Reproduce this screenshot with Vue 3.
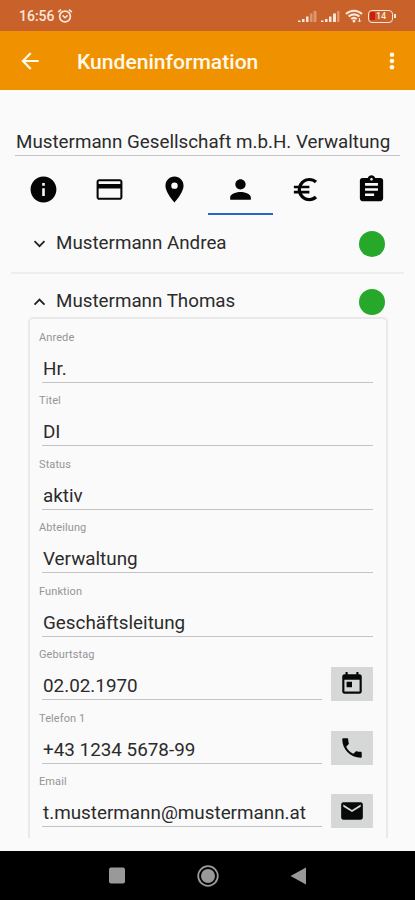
<script setup>
const tabs = [
  { name: 'info', d: 'M12 2C6.48 2 2 6.48 2 12s4.48 10 10 10 10-4.48 10-10S17.52 2 12 2zm1 15h-2v-6h2v6zm0-8h-2V7h2v2z' },
  { name: 'card', d: 'M20 4H4c-1.11 0-2 .89-2 2v12c0 1.11.89 2 2 2h16c1.11 0 2-.89 2-2V6c0-1.11-.89-2-2-2zm.4 14.400H3.600v-7.200h16.800v7.200zm0-10.700H3.600V5.600h16.800v2.100z' },
  { name: 'place', d: 'M12 2C8.13 2 5 5.13 5 9c0 5.25 7 13 7 13s7-7.75 7-13c0-3.87-3.13-7-7-7zm0 9.5a2.5 2.5 0 1 1 0-5 2.5 2.5 0 0 1 0 5z' },
  { name: 'person', active: true, d: 'M12 12c2.21 0 4-1.79 4-4s-1.79-4-4-4-4 1.79-4 4 1.79 4 4 4zm0 2c-2.67 0-8 1.34-8 4v2h16v-2c0-2.66-5.33-4-8-4z' },
  { name: 'euro', d: 'M15 18.5c-2.51 0-4.68-1.42-5.76-3.5H15v-2H8.58c-.05-.33-.08-.66-.08-1s.03-.67.08-1H15V9H9.24C10.32 6.92 12.5 5.5 15 5.5c1.61 0 3.09.59 4.23 1.57L21 5.3C19.41 3.87 17.3 3 15 3c-3.92 0-7.24 2.51-8.48 6H3v2h3.06c-.04.33-.06.66-.06 1s.02.67.06 1H3v2h3.52c1.24 3.49 4.56 6 8.48 6 2.31 0 4.41-.87 6-2.3l-1.78-1.77c-1.13.98-2.6 1.57-4.22 1.57z' },
  { name: 'clipboard', d: 'M19 3h-4.18C14.4 1.84 13.3 1 12 1s-2.4.84-2.82 2H5c-1.1 0-2 .9-2 2v14c0 1.1.9 2 2 2h14c1.1 0 2-.9 2-2V5c0-1.1-.9-2-2-2zm-7 0c.55 0 1 .45 1 1s-.45 1-1 1-1-.45-1-1 .45-1 1-1zm2 14H7v-2h7v2zm3-4H7v-2h10v2zm0-4H7V7h10v2z' },
]
const calendar = 'M19 3h-1V1h-2v2H8V1H6v2H5c-1.11 0-1.99.9-1.99 2L3 19c0 1.1.89 2 2 2h14c1.1 0 2-.9 2-2V5c0-1.1-.9-2-2-2zm0 16H5V8h14v11zM7 10h5v5H7z'
const phone = 'M6.62 10.79c1.44 2.83 3.76 5.14 6.59 6.59l2.2-2.2c.27-.27.67-.36 1.02-.24 1.12.37 2.33.57 3.57.57.55 0 1 .45 1 1V20c0 .55-.45 1-1 1-9.39 0-17-7.61-17-17 0-.55.45-1 1-1h3.5c.55 0 1 .45 1 1 0 1.25.2 2.45.57 3.57.11.35.03.74-.25 1.02l-2.2 2.2z'
const mail = 'M20 4H4c-1.1 0-1.99.9-1.99 2L2 18c0 1.1.9 2 2 2h16c1.1 0 2-.9 2-2V6c0-1.1-.9-2-2-2zm0 4l-8 5-8-5V6l8 5 8-5v2z'
const fields = [
  { label: 'Anrede', value: 'Hr.' },
  { label: 'Titel', value: 'DI' },
  { label: 'Status', value: 'aktiv' },
  { label: 'Abteilung', value: 'Verwaltung' },
  { label: 'Funktion', value: 'Geschäftsleitung' },
  { label: 'Geburtstag', value: '02.02.1970', icon: calendar },
  { label: 'Telefon 1', value: '+43 1234 5678-99', icon: phone },
  { label: 'Email', value: 't.mustermann@mustermann.at', icon: mail },
]
</script>

<template>
  <div class="screen">
    <div class="status">
      <span class="time">16:56</span>
      <svg class="alarm" viewBox="0 0 16 16" fill="none" stroke="currentColor">
        <circle cx="8" cy="8.5" r="5.4" stroke-width="1.7" />
        <path d="M1.2 4.2 4 1.7M14.8 4.2 12 1.7" stroke-width="1.8" />
        <path d="M5.6 7.4 8 9.7l2.6-2.3" stroke-width="1.5" />
      </svg>
      <span class="spacer"></span>
      <svg class="signal" viewBox="0 0 19 13" fill="currentColor">
        <path d="M0 10.500h2.500V12H0zM4 9h2.500v3H4zM8 6.500h2.500V12H8z" />
        <path d="M12 3.500h2.500V12H12zM15.500 1h3v11h-3z" opacity=".4" />
      </svg>
      <svg class="signal second" viewBox="0 0 19 13" fill="currentColor">
        <path d="M0 10.500h2.500V12H0zM4 9h2.500v3H4zM8 6.500h2.500V12H8zM12 3.500h3V12h-3z" />
        <path d="M16 1h2.500v11H16z" opacity=".4" />
      </svg>
      <svg class="wifi" viewBox="0 0 18 14" fill="none" stroke="currentColor">
        <path d="M1 5C5.500.7 12.500.7 17 5M3.600 7.600c3-3 7.800-3 10.800 0M6.200 10.100c1.600-1.500 4-1.500 5.600 0" stroke-width="2.1" />
        <circle cx="9" cy="12" r="1.500" fill="currentColor" stroke="none" />
        <path d="M14.500 9v4M13 11.500l1.500 1.500L16 11.500" stroke-width="1" />
      </svg>
      <span class="battery"><i class="charge"></i><b>14</b></span>
    </div>

    <header class="appbar">
      <svg class="back" viewBox="0 0 24 24" fill="currentColor">
        <path d="M20 11H7.830l5.590-5.590L12 4l-8 8 8 8 1.410-1.410L7.830 13H20v-2z" />
      </svg>
      <h1>Kundeninformation</h1>
      <svg class="more" viewBox="0 0 6 20" fill="currentColor">
        <circle cx="3" cy="3.800" r="2.300" /><circle cx="3" cy="10" r="2.300" /><circle cx="3" cy="16.200" r="2.300" />
      </svg>
    </header>

    <main>
      <div class="company"><span>Mustermann Gesellschaft m.b.H. Verwaltung</span></div>
      <nav class="tabs">
        <div v-for="t in tabs" :key="t.name" class="tab" :class="{ active: t.active }">
          <svg viewBox="0 0 24 24"><path :d="t.d" /></svg>
        </div>
      </nav>

      <div class="person">
        <svg class="chevron" viewBox="0 0 13 8"><path d="M1.500 1.200 6.500 6.200 11.500 1.200" /></svg>
        <span>Mustermann Andrea</span>
        <i class="dot"></i>
      </div>
      <div class="person open">
        <svg class="chevron" viewBox="0 0 13 8"><path d="M1.500 6.600 6.500 1.600 11.500 6.600" /></svg>
        <span>Mustermann Thomas</span>
        <i class="dot"></i>
      </div>

      <section class="panel">
        <div v-for="f in fields" :key="f.label" class="field">
          <label>{{ f.label }}</label>
          <div class="line">
            <div class="value">{{ f.value }}</div>
            <div v-if="f.icon" class="action">
              <svg viewBox="0 0 24 24"><path :d="f.icon" /></svg>
            </div>
          </div>
        </div>
      </section>
    </main>

    <footer class="sysnav">
      <svg viewBox="0 0 24 24"><rect x="4" y="3.500" width="16" height="16" rx="2" fill="#999" /></svg>
      <svg viewBox="0 0 24 24"><circle cx="12" cy="12" r="9.800" fill="none" stroke="#999" stroke-width="1.800" /><circle cx="12" cy="12" r="7" fill="#999" /></svg>
      <svg viewBox="0 0 24 24"><path d="M3.500 12 19 3.500v17z" fill="#999" /></svg>
    </footer>
  </div>
</template>

<style>
body {
  margin: 0;
  background: #fafafa;
}
</style>

<style scoped>
.screen {
  width: 415px;
  height: 900px;
  display: flex;
  flex-direction: column;
  overflow: hidden;
  background: #fafafa;
  color: #2b2b2b;
  font-family: Roboto, "Liberation Sans", sans-serif;
}
svg {
  display: block;
  flex: none;
}
.status {
  box-sizing: border-box;
  height: 31px;
  flex: none;
  display: flex;
  align-items: center;
  padding: 1px 20px 0 19px;
  background: #c8622a;
  color: #fbe6da;
}
.time {
  width: 36px;
  font-size: 14px;
  font-weight: 500;
}
.alarm {
  width: 16px;
  height: 16px;
  margin-left: 2px;
}
.spacer {
  flex: 1;
}
.signal {
  width: 19px;
  height: 13px;
  margin-right: 4px;
}
.signal.second {
  margin-right: 5px;
}
.wifi {
  width: 18px;
  height: 14px;
  margin-right: 5px;
}
.battery {
  position: relative;
  box-sizing: border-box;
  width: 25px;
  height: 13px;
  margin-right: 2px;
  border: 1.5px solid #fbe6da;
  border-radius: 4px;
  display: flex;
  align-items: center;
}
.battery::after {
  content: "";
  position: absolute;
  right: -4px;
  top: 3px;
  width: 2px;
  height: 4px;
  background: #fbe6da;
}
.charge {
  width: 5px;
  height: 8px;
  margin-left: 1px;
  background: #d01c0c;
}
.battery b {
  font-size: 9px;
  font-weight: 500;
  line-height: 10px;
  margin-left: 1px;
}
.appbar {
  height: 59px;
  flex: none;
  display: flex;
  align-items: center;
  background: #f09200;
  color: #fff8ec;
}
.back {
  width: 26px;
  height: 26px;
  margin-left: 17px;
}
h1 {
  flex: 1;
  margin: 2px 0 0 34px;
  font-size: 21.1px;
  font-weight: 500;
}
.more {
  width: 6px;
  height: 20px;
  margin-right: 20px;
}
main {
  flex: 1;
  min-height: 0;
  display: flex;
  flex-direction: column;
}
.company {
  margin: 35px 15px 0;
  height: 30px;
  flex: none;
  line-height: 34px;
  padding-left: 1px;
  border-bottom: 1px solid #c3c3c3;
  font-size: 18.8px;
  white-space: nowrap;
}
.tabs {
  height: 59px;
  flex: none;
  margin: 0 11px;
  display: grid;
  grid-template-columns: repeat(6, 1fr);
}
.tab {
  display: flex;
  justify-content: center;
  align-items: center;
  padding-top: 10px;
  border-bottom: 2px solid transparent;
}
.tab.active {
  border-color: #2566cc;
}
.tab svg {
  width: 31px;
  height: 31px;
  fill: #050505;
}
.person {
  box-sizing: border-box;
  height: 59px;
  flex: none;
  display: flex;
  align-items: center;
  margin: 0 11px;
  padding: 0 19px 2px 22px;
  border-bottom: 2px solid #eee;
  font-size: 18.8px;
}
.person.open {
  height: 43px;
  padding-top: 10px;
  padding-bottom: 0;
  border: 0;
}
.chevron {
  width: 13px;
  height: 8px;
  margin-top: 3px;
}
.chevron path {
  fill: none;
  stroke: #222;
  stroke-width: 1.8;
}
.person span {
  flex: 1;
  margin-left: 10px;
}
.dot {
  width: 26px;
  height: 26px;
  margin-top: 3px;
  border-radius: 50%;
  background: #26a82a;
}
.panel {
  box-sizing: border-box;
  height: 521px;
  margin: 0 27px 0 28px;
  padding: 12px 13px 0 9px;
  border: 2px solid #e9e9e9;
  border-bottom: 0;
  border-radius: 5px 5px 0 0;
}
.field {
  height: 63.45px;
}
label {
  display: block;
  height: 14px;
  line-height: 13px;
  font-size: 11px;
  letter-spacing: 0.1px;
  color: #959595;
}
.line {
  height: 38px;
  display: flex;
  gap: 9px;
  margin-left: 3px;
}
.value {
  flex: 1;
  box-sizing: border-box;
  height: 38px;
  line-height: 49px;
  padding-left: 1px;
  border-bottom: 1px solid #c3c3c3;
  font-size: 18.85px;
  white-space: nowrap;
}
.action {
  width: 42px;
  height: 34px;
  margin-top: 5px;
  display: flex;
  align-items: center;
  justify-content: center;
  border-radius: 1px;
  background: #d6d8d7;
}
.action svg {
  width: 26px;
  height: 26px;
  fill: #080808;
}
.sysnav {
  height: 49px;
  flex: none;
  display: flex;
  align-items: center;
  justify-content: center;
  gap: 67px;
  background: #000;
}
.sysnav svg {
  width: 24px;
  height: 24px;
}
</style>
